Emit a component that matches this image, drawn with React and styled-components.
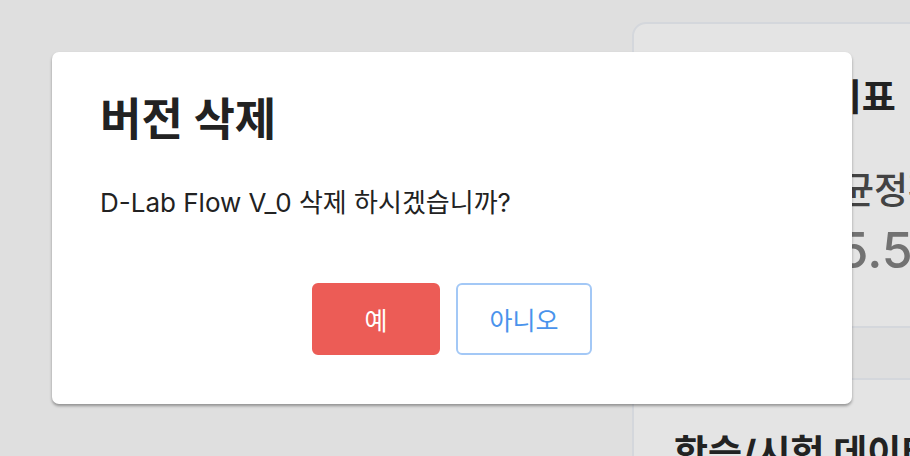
import React from 'react'
import styled, { createGlobalStyle } from 'styled-components'

const GlobalStyle = createGlobalStyle`
  html, body {
    margin: 0;
    padding: 0;
    width: 910px;
    height: 456px;
    overflow: hidden;
    background: #f5f5f5;
    font-family: "Inter", "Noto Sans CJK KR", sans-serif;
  }
`

const Page = styled.div`
  position: relative;
  width: 910px;
  height: 456px;
  display: flex;
  overflow: hidden;
`

const MainArea = styled.div`
  width: 632px;
  flex-shrink: 0;
`

const SideColumn = styled.div`
  display: flex;
  flex-direction: column;
  gap: 50px;
  padding-top: 22px;
  flex-shrink: 0;
`

const Card = styled.section`
  width: 560px;
  height: ${props => props.h ? props.h + 'px' : 'auto'};
  flex-shrink: 0;
  box-sizing: border-box;
  background: #fafafa;
  border: 2px solid #e9ecf1;
  border-radius: 14px;
  padding: 50px 40px 0 40px;
`

const CardTitle = styled.h3`
  margin: 0;
  font-size: 37px;
  font-weight: 700;
  color: #262626;
  line-height: 1.3;
  white-space: nowrap;
`

const StatGrid = styled.div`
  display: grid;
  grid-template-columns: 132px 220px;
  margin-top: 45px;
`

const Stat = styled.div`
  display: flex;
  flex-direction: column;
  gap: 5px;
`

const StatLabel = styled.div`
  font-size: 37px;
  font-weight: 500;
  color: #4a4a4a;
  line-height: 1.3;
  white-space: nowrap;
`

const StatValue = styled.div`
  font-size: 50px;
  font-weight: 500;
  color: #7d7d7d;
  line-height: 1.21;
  white-space: nowrap;
`

const Overlay = styled.div`
  position: absolute;
  inset: 0;
  background: rgba(0, 0, 0, 0.086);
  display: flex;
  align-items: center;
  padding-left: 52px;
`

const Modal = styled.div`
  width: 800px;
  height: 352px;
  box-sizing: border-box;
  background: #fff;
  border-radius: 7px;
  box-shadow: 0 2px 3px rgba(0, 0, 0, 0.35);
  padding: 39px 48px 49px 48px;
  display: flex;
  flex-direction: column;
`

const Title = styled.h2`
  margin: 0;
  font-size: 45px;
  font-weight: 700;
  color: #222;
  line-height: 1.3;
`

const Message = styled.p`
  margin: 36px 0 0 0;
  font-size: 26px;
  color: #222;
  line-height: 1.3;
`

const Actions = styled.div`
  margin-top: auto;
  display: flex;
  justify-content: center;
  gap: 16px;
`

const Button = styled.button`
  width: ${props => props.w}px;
  height: 72px;
  box-sizing: border-box;
  border-radius: 6px;
  font-family: inherit;
  font-size: 25px;
  cursor: pointer;
  background: ${props => props.primary ? '#ec5c56' : '#fff'};
  color: ${props => props.primary ? '#fff' : '#4a93ec'};
  border: 2px solid ${props => props.primary ? '#ec5c56' : '#a3c8f6'};
`

export default function App() {
  return (
    <>
      <GlobalStyle />
      <Page>
        <MainArea />
        <SideColumn>
          <Card h={306}>
            <CardTitle>모델 성능 지표</CardTitle>
            <StatGrid>
              <Stat>
                <StatLabel>정확도</StatLabel>
                <StatValue>97%</StatValue>
              </Stat>
              <Stat>
                <StatLabel>평균정확도</StatLabel>
                <StatValue>95.5%</StatValue>
              </Stat>
            </StatGrid>
          </Card>
          <Card h={300}>
            <CardTitle>학습/시험 데이터</CardTitle>
          </Card>
        </SideColumn>
        <Overlay>
          <Modal>
            <Title>버전 삭제</Title>
            <Message>D-Lab Flow V_0 삭제 하시겠습니까?</Message>
            <Actions>
              <Button primary w={128}>예</Button>
              <Button w={136}>아니오</Button>
            </Actions>
          </Modal>
        </Overlay>
      </Page>
    </>
  )
}
